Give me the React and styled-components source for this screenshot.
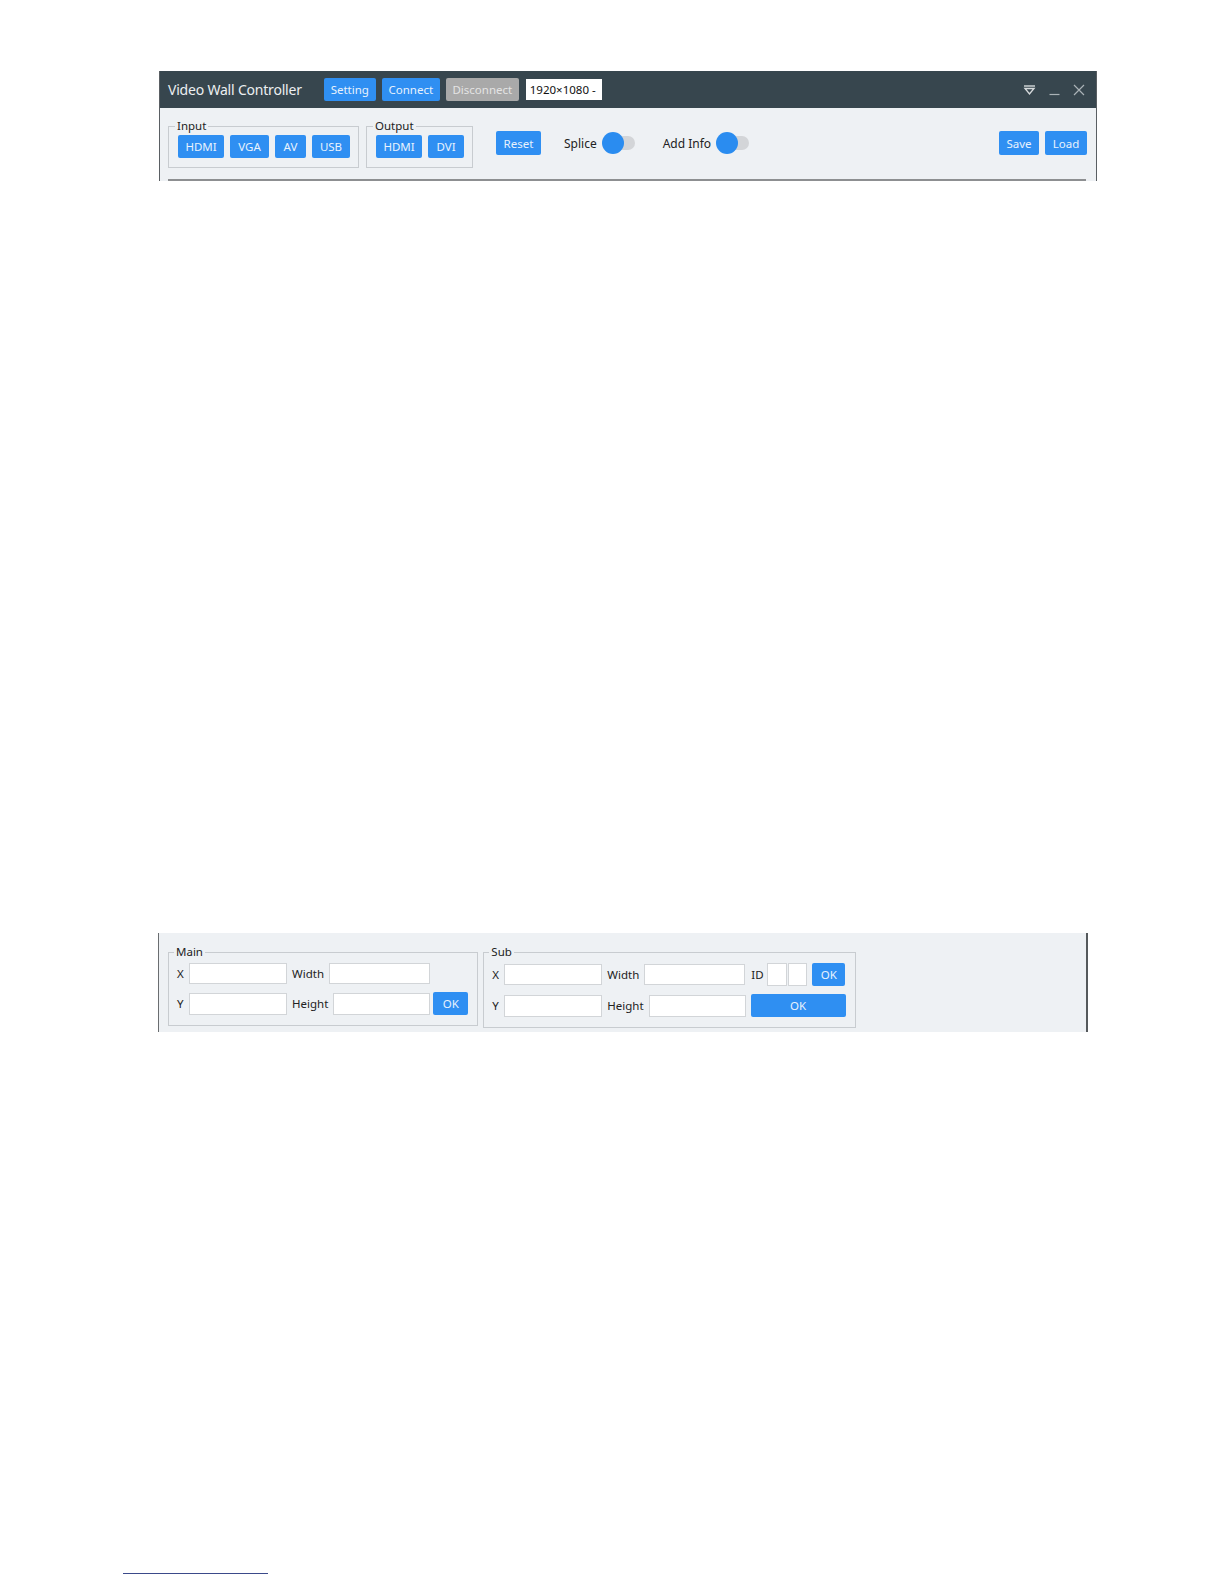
import React from 'react';
import styled, { createGlobalStyle } from 'styled-components';

const Global = createGlobalStyle`
html, body {
    margin: 0;
    background: #ffffff;
    font-family: "Noto Sans", "Open Sans", sans-serif;
    overflow: hidden;
}
`;

const blue = '#2f8ff2';

function App() {
    return (
        <Page>
            <Global />
            <Window>
                <TitleBar>
                    <Title>Video Wall Controller</Title>
                    <TopButtons>
                        <Btn $w={52} $h={23}>Setting</Btn>
                        <Btn $w={58} $h={23}>Connect</Btn>
                        <Btn $w={73} $h={23} $off>Disconnect</Btn>
                        <Resolution>1920×1080 -</Resolution>
                    </TopButtons>
                    <WinIcons>
                        <svg width="13" height="12" viewBox="0 0 13 12">
                            <line x1="1" y1="2" x2="12" y2="2" stroke="#d6dadc" strokeWidth="1.4" />
                            <path d="M2 4.5 L11 4.5 L6.5 10 Z" fill="none" stroke="#d6dadc" strokeWidth="1.4" />
                        </svg>
                        <svg width="11" height="12" viewBox="0 0 11 12">
                            <line x1="0.5" y1="10.5" x2="10.5" y2="10.5" stroke="#aab2b6" strokeWidth="1.2" />
                        </svg>
                        <svg width="12" height="12" viewBox="0 0 12 12">
                            <path d="M1 1 L11 11 M11 1 L1 11" stroke="#aab2b6" strokeWidth="1.2" />
                        </svg>
                    </WinIcons>
                </TitleBar>
                <Toolbar>
                    <ToolRow>
                        <Groups>
                            <Group>
                                <Legend>Input</Legend>
                                <BtnRow>
                                    <Btn $w={46}>HDMI</Btn>
                                    <Btn $w={39}>VGA</Btn>
                                    <Btn $w={31}>AV</Btn>
                                    <Btn $w={38}>USB</Btn>
                                </BtnRow>
                            </Group>
                            <Group>
                                <Legend>Output</Legend>
                                <BtnRow>
                                    <Btn $w={46}>HDMI</Btn>
                                    <Btn $w={36}>DVI</Btn>
                                </BtnRow>
                            </Group>
                        </Groups>
                        <Actions>
                            <Btn $w={45} $h={24}>Reset</Btn>
                            <SwitchLabel $gap={23}>Splice</SwitchLabel>
                            <Switch />
                            <SwitchLabel $gap={28}>Add Info</SwitchLabel>
                            <Switch />
                        </Actions>
                        <FileButtons>
                            <Btn $w={40} $h={24}>Save</Btn>
                            <Btn $w={42} $h={24}>Load</Btn>
                        </FileButtons>
                    </ToolRow>
                    <Rule />
                </Toolbar>
            </Window>

            <Panel>
                <Group $form>
                    <Legend>Main</Legend>
                    <Rows>
                        <Row>
                            <Label $w={7}>X</Label>
                            <Field $w={98} $h={21} />
                            <Label>Width</Label>
                            <Field $w={101} $h={21} />
                        </Row>
                        <Row>
                            <Label $w={7}>Y</Label>
                            <Field $w={98} $h={22} />
                            <Label>Height</Label>
                            <Field $w={97} $h={22} />
                            <Btn $w={35} $h={23} $tight>OK</Btn>
                        </Row>
                    </Rows>
                </Group>
                <Group $form>
                    <Legend>Sub</Legend>
                    <Rows>
                        <Row>
                            <Label $w={7}>X</Label>
                            <Field $w={98} $h={21} />
                            <Label>Width</Label>
                            <Field $w={101} $h={21} />
                            <Label $w={11} $gap={1}>ID</Label>
                            <IdPair>
                                <Field $w={20} $h={23} />
                                <Field $w={19} $h={23} />
                            </IdPair>
                            <Btn $w={33} $h={23}>OK</Btn>
                        </Row>
                        <Row>
                            <Label $w={7}>Y</Label>
                            <Field $w={98} $h={22} />
                            <Label>Height</Label>
                            <Field $w={97} $h={22} />
                            <Btn $w={95} $h={23}>OK</Btn>
                        </Row>
                    </Rows>
                </Group>
            </Panel>

            <Footnote />
        </Page>
    );
}

const Page = styled.div`
padding-top: 71px;
`;

const Window = styled.div`
margin-left: 159px;
width: 938px;
box-sizing: border-box;
border-left: 1px solid #5a5f63;
border-right: 1px solid #5a5f63;
`;

const TitleBar = styled.div`
height: 37px;
background: #37464e;
display: flex;
align-items: center;
padding-left: 8px;
padding-right: 11px;
`;

const Title = styled.span`
color: #eceff1;
font-size: 14px;
letter-spacing: -0.2px;
`;

const TopButtons = styled.div`
display: flex;
align-items: center;
gap: 6px;
margin-left: 22px;
`;

const Btn = styled.button`
width: ${p => p.$w}px;
height: ${p => p.$h || 23}px;
padding: 0;
border: none;
border-radius: 2px;
background: ${p => (p.$off ? '#a9a9a9' : blue)};
color: ${p => (p.$off ? '#e4e4e4' : '#e8f2fd')};
font-family: "Noto Sans", "Open Sans", sans-serif;
font-size: 11.5px;
flex: none;
${p => (p.$tight ? 'margin-left: -2px;' : '')}
`;

const Resolution = styled.div`
margin-left: 1px;
width: 76px;
height: 21px;
box-sizing: border-box;
background: #ffffff;
color: #111;
font-size: 11.5px;
display: flex;
align-items: center;
padding-left: 4px;
`;

const WinIcons = styled.div`
margin-left: auto;
display: flex;
align-items: center;
gap: 13px;
`;

const Toolbar = styled.div`
background: #eef1f4;
height: 73px;
box-sizing: border-box;
padding-top: 11px;
`;

const ToolRow = styled.div`
display: flex;
align-items: flex-start;
height: 49px;
padding-left: 8px;
padding-right: 9px;
`;

const Groups = styled.div`
display: flex;
gap: 7px;
`;

const Group = styled.fieldset`
margin: 0;
padding: ${p => (p.$form ? '4px 9px 10px 8px' : '2px 8px 9px 9px')};
border: 1px solid #c8ccd0;
min-width: 0;
`;

const Legend = styled.legend`
font-size: 11.5px;
line-height: 14px;
color: #222;
padding: 0 2px;
margin-left: -3px;
`;

const BtnRow = styled.div`
display: flex;
gap: 6px;
`;

const Actions = styled.div`
display: flex;
align-items: center;
height: 24px;
margin-top: 12px;
margin-left: 23px;
`;

const SwitchLabel = styled.span`
font-size: 12px;
color: #222;
margin-left: ${p => p.$gap}px;
margin-right: 5px;
`;

const Switch = styled.span`
position: relative;
width: 33px;
height: 22px;
display: inline-block;
&::before {
    content: '';
    position: absolute;
    left: 6px;
    right: 0;
    top: 4px;
    height: 14px;
    border-radius: 7px;
    background: #d3d5d8;
}
&::after {
    content: '';
    position: absolute;
    left: 0;
    top: 0;
    width: 22px;
    height: 22px;
    border-radius: 50%;
    background: #2a8cf0;
}
`;

const FileButtons = styled.div`
margin-left: auto;
margin-top: 12px;
display: flex;
gap: 6px;
`;

const Rule = styled.div`
height: 2px;
background: #8d8f91;
margin: 11px 10px 0 8px;
`;

const Panel = styled.div`
margin-top: 752px;
margin-left: 158px;
width: 930px;
height: 99px;
box-sizing: border-box;
background: #eef1f4;
border-left: 1px solid #6a6d70;
border-right: 2px solid #55595c;
padding: 12px 0 0 9px;
display: flex;
align-items: flex-start;
gap: 5px;
`;

const Rows = styled.div`
display: flex;
flex-direction: column;
gap: 8px;
`;

const Row = styled.div`
display: flex;
align-items: center;
gap: 5px;
`;

const Label = styled.span`
font-size: 11.5px;
color: #222;
${p => (p.$w ? `width: ${p.$w}px;` : '')}
${p => (p.$gap ? `margin-left: ${p.$gap}px;` : '')}
flex: none;
`;

const Field = styled.input`
width: ${p => p.$w}px;
height: ${p => p.$h}px;
box-sizing: border-box;
border: 1px solid #d2d5d8;
background: #ffffff;
padding: 0;
margin: 0;
flex: none;
`;

const IdPair = styled.div`
display: flex;
gap: 1px;
`;

const Footnote = styled.div`
margin-top: 541px;
margin-left: 123px;
width: 145px;
height: 1px;
background: #3b4a8a;
`;

export default App;
